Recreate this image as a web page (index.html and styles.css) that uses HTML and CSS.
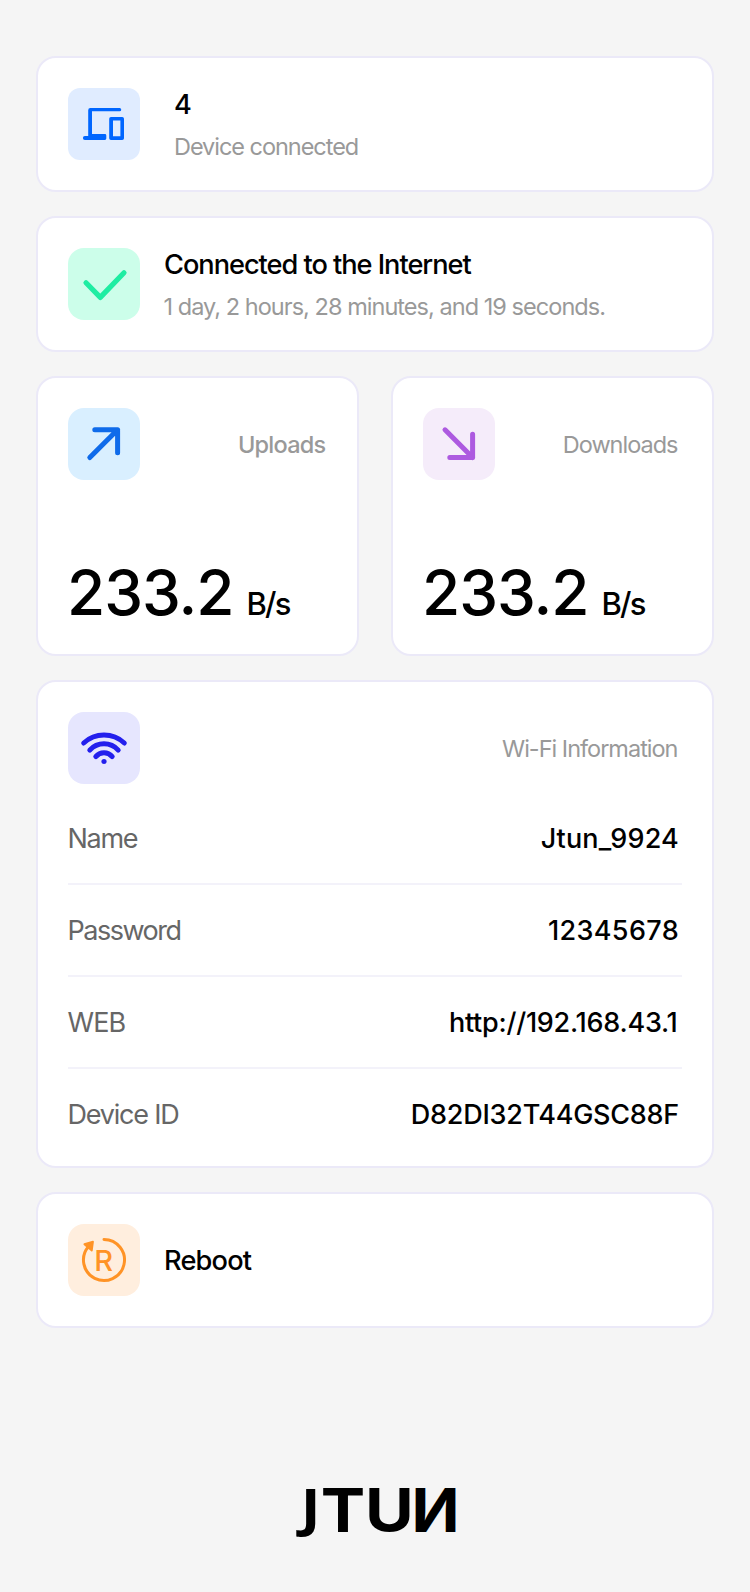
FILE: index.html
```html
<!DOCTYPE html>
<html lang="en">
<head>
<meta charset="utf-8">
<title>JTUN</title>
<link rel="stylesheet" href="styles.css">
</head>
<body>
<main class="page">
  <section class="card status status-devices">
    <div class="tile tile-devices">
      <svg viewBox="0 0 72 72"><path fill="#0066ff" d="M20.2 22.2q0-2.2 2.2-2.2H51.6a1.6 1.6 0 0 1 0 3.3H24V46H36.9q1.4 0 1.4 1.4V50.6q0 1.4-1.4 1.4H16.9a2 2 0 0 1 0-4H20.2Z"/><path fill="#0066ff" fill-rule="evenodd" d="M43 29H54.2q1.8 0 1.8 1.8V50.2q0 1.8-1.8 1.8H43q-1.8 0-1.8-1.8V30.8q0-1.8 1.8-1.8ZM45 32.6V48.2H52.4V32.6Z"/></svg>
    </div>
    <div class="status-text">
      <div class="title">4</div>
      <div class="sub">Device connected</div>
    </div>
  </section>

  <section class="card status">
    <div class="tile tile-online">
      <svg viewBox="0 0 72 72"><path class="stroke" stroke="#1eeda2" stroke-width="5.2" d="M18 34.8 32.3 49.4 56 24.8"/></svg>
    </div>
    <div class="status-text">
      <div class="title connected">Connected to the Internet</div>
      <div class="sub uptime">1 day, 2 hours, 28 minutes, and 19 seconds.</div>
    </div>
  </section>

  <div class="stats">
    <section class="card stat">
      <div class="card-head">
        <div class="tile tile-up">
          <svg viewBox="0 0 72 72"><path class="stroke" stroke="#0f6bea" stroke-width="5" d="M26.8 21.8H49.6V44.7M49.6 21.8 21.8 49.6"/></svg>
        </div>
        <span class="label uploads">Uploads</span>
      </div>
      <div class="reading"><span class="number">233.2</span><span class="unit">B/s</span></div>
    </section>
    <section class="card stat">
      <div class="card-head">
        <div class="tile tile-down">
          <svg viewBox="0 0 72 72"><path class="stroke" stroke="#ad5ae0" stroke-width="5" d="M49.6 26.2V49.6H26.8M22 21.8 49.6 49.6"/></svg>
        </div>
        <span class="label">Downloads</span>
      </div>
      <div class="reading"><span class="number">233.2</span><span class="unit">B/s</span></div>
    </section>
  </div>

  <section class="card wifi">
    <div class="card-head">
      <div class="tile tile-wifi">
        <svg viewBox="0 0 72 72"><g class="stroke" stroke="#231fed" stroke-width="5"><path d="M15.7 31A29.75 29.75 0 0 1 56.3 31"/><path d="M21.8 38.1A19 19 0 0 1 50.2 38.1"/><path d="M27.8 44.6A10.5 10.5 0 0 1 44.2 44.6"/></g><circle cx="36" cy="49.5" r="2.6" fill="#231fed"/></svg>
      </div>
      <span class="label">Wi-Fi Information</span>
    </div>
    <dl class="rows">
      <div class="row"><dt>Name</dt><dd class="ssid">Jtun_9924</dd></div>
      <div class="row"><dt class="password-label">Password</dt><dd class="password">12345678</dd></div>
      <div class="row"><dt class="web-label">WEB</dt><dd class="url">http://192.168.43.1</dd></div>
      <div class="row"><dt class="id-label">Device ID</dt><dd>D82DI32T44GSC88F</dd></div>
    </dl>
  </section>

  <section class="card status reboot">
    <div class="tile tile-reboot">
      <svg viewBox="0 0 72 72"><path class="stroke" stroke="#ff9326" stroke-width="3" d="M36 15.5A20.5 20.5 0 1 1 20.3 22.8"/><path fill="#ff9326" stroke="#ff9326" stroke-width="1.8" stroke-linejoin="round" d="M16.4 20.2 25 17.7 23.8 26.6Z"/><text class="mark" x="26.2" y="46.5" fill="#ff9326">R</text></svg>
    </div>
    <div class="title">Reboot</div>
  </section>

  <svg class="logo" viewBox="0 0 160 52" aria-label="JTUN">
    <text class="logo-hook" transform="translate(2.8 38.3) scale(1 .87)">J</text>
    <text transform="translate(22.8 43.7) scale(1.11 1)">T</text>
    <text transform="translate(67 43.4) scale(1.11 .99)">U</text>
    <text transform="translate(161.400 43.7) scale(-1.05 1)">N</text>
  </svg>
</main>
</body>
</html>
```
FILE: styles.css
```css
* { box-sizing: border-box; }

body {
  margin: 0;
  background: #f5f5f5;
  color: #000;
  font-family: Inter, "Liberation Sans", sans-serif;
}

.page {
  display: flex;
  flex-direction: column;
  gap: 24px;
  min-height: 1592px;
  padding: 56px 36px 0;
}

.card {
  padding: 30px;
  background: #fff;
  border: 2px solid #ebe9f8;
  border-radius: 20px;
}

.tile {
  flex: none;
  width: 72px;
  height: 72px;
  border-radius: 16px;
}
.tile svg { display: block; width: 72px; height: 72px; }
.tile-devices { background: #e0ecff; border-radius: 12px; }
.tile-online { background: #ccfeea; }
.tile-up { background: #d9efff; }
.tile-down { background: #f5ecfa; }
.tile-wifi { background: #e6e6fe; }
.tile-reboot { background: #ffeede; }

.stroke { fill: none; stroke-linecap: round; stroke-linejoin: round; }
.mark { font-size: 29px; font-weight: 500; }

.status { display: flex; gap: 24px; height: 136px; }
.status-devices { gap: 34px; }
.status-text { display: flex; flex-direction: column; gap: 10px; padding-top: 1px; }

.title {
  font-size: 27.2px;
  font-weight: 500;
  line-height: 32px;
  letter-spacing: -0.8px;
  white-space: nowrap;
}
.connected { letter-spacing: -1.03px; }
.sub {
  color: #999;
  font-size: 23.5px;
  line-height: 32px;
  letter-spacing: -1.04px;
  white-space: nowrap;
}
.uptime { margin-left: -0.5px; letter-spacing: -0.96px; }

.stats { display: grid; grid-template-columns: 1fr 1fr; gap: 32px; }
.stat { height: 280px; }

.card-head { display: flex; align-items: center; justify-content: space-between; }
.label {
  padding-right: 4.5px;
  color: #999;
  font-size: 23.5px;
  letter-spacing: -1px;
}
.uploads { padding-right: 1.5px; font-weight: 500; letter-spacing: -0.74px; }

.reading {
  display: flex;
  align-items: baseline;
  margin: 82px 0 0 -1px;
  font-weight: 500;
  line-height: 62px;
}
.number { font-size: 62px; letter-spacing: -1.021px; }
.unit { margin-left: 13px; font-size: 31px; letter-spacing: -1.759px; }

.wifi { height: 488px; }
.rows { margin: 9px 0 0; }
.row {
  display: flex;
  align-items: center;
  justify-content: space-between;
  height: 92px;
  border-bottom: 2px solid #f3f2fa;
  font-size: 27px;
}
.row:last-child { border-bottom-color: transparent; }
.row dt { margin-left: -0.5px; color: #666; letter-spacing: -1.3px; }
.row .password-label { letter-spacing: -1.5px; }
.row .web-label { letter-spacing: -0.9px; }
.row .id-label { letter-spacing: -1.2px; }
.row dd {
  margin: 0;
  padding-right: 3px;
  font-weight: 500;
  letter-spacing: -0.245px;
}
.row .ssid { letter-spacing: 0.199px; }
.row .password { letter-spacing: 0.353px; }
.row .url { padding-right: 4.5px; }

.reboot { align-items: center; }
.reboot .title { padding-top: 2px; }

.logo {
  flex: none;
  align-self: flex-start;
  width: 160px;
  height: 52px;
  margin: 136px 0 0 262px;
  overflow: visible;
  font-size: 60px;
  font-weight: 700;
}
.logo-hook { font-family: "Open Sans", sans-serif; }
```
